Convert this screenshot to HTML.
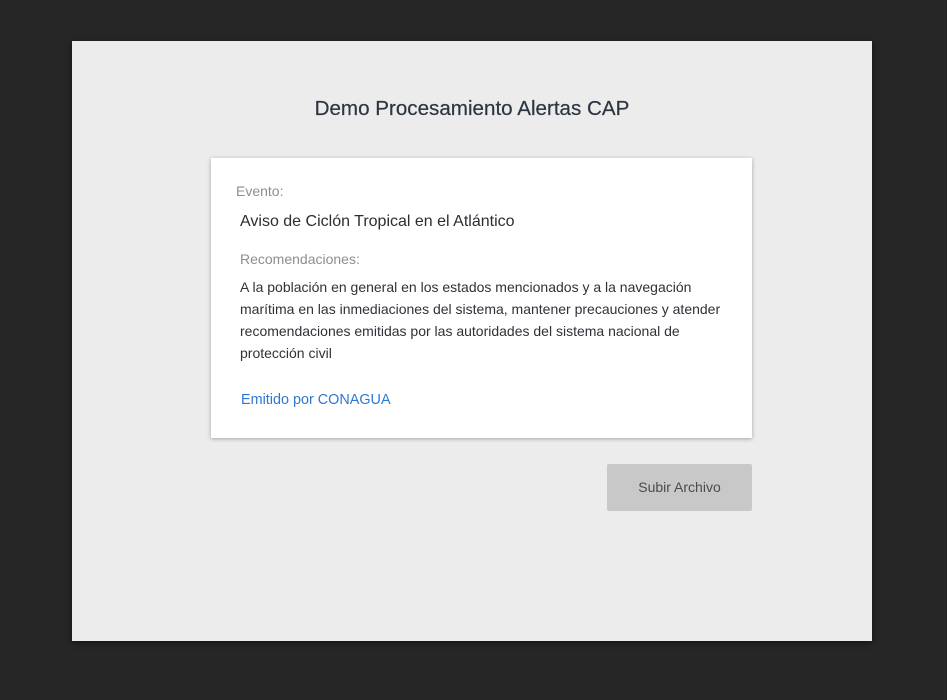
<!DOCTYPE html>
<html><head><meta charset="utf-8"><style>
*{margin:0;padding:0;box-sizing:border-box}
body{width:947px;height:700px;background:#262626;font-family:"Liberation Sans",sans-serif;position:relative;overflow:hidden}
.panel{position:absolute;left:72px;top:41px;width:800px;height:600px;background:#ececec;box-shadow:0 2px 6px rgba(0,0,0,.5)}
h1{position:absolute;left:0;width:800px;top:56px;text-align:center;font-size:20.6px;font-weight:normal;color:#2d3540;line-height:24px;-webkit-text-stroke:0.2px #2d3540}
.card{position:absolute;left:139px;top:117px;width:541px;height:280px;background:#fff;box-shadow:0 1px 4px rgba(0,0,0,.3)}
.t{position:absolute;white-space:nowrap}
.lbl{font-size:14px;color:#8e8e8e}
.p{position:absolute;left:29px;top:118px;width:495px;font-size:14px;line-height:22px;color:#2e3238}
.btn{position:absolute;left:535px;top:423px;width:145px;height:47px;background:#c8c8c8;border-radius:2px;text-align:center;line-height:47px;font-size:14px;color:#4b4b4b}
</style></head><body>
<div class="panel">
<h1>Demo Procesamiento Alertas CAP</h1>
<div class="card">
<div class="t lbl" style="left:25px;top:25px">Evento:</div>
<div class="t" style="left:29px;top:55px;font-size:16px;color:#2a2e33">Aviso de Ciclón Tropical en el Atlántico</div>
<div class="t lbl" style="left:29px;top:93px">Recomendaciones:</div>
<div class="p">A la población en general en los estados mencionados y a la navegación marítima en las inmediaciones del sistema, mantener precauciones y atender recomendaciones emitidas por las autoridades del sistema nacional de protección civil</div>
<div class="t" style="left:30px;top:234px;font-size:14.4px;color:#2f78d0">Emitido por CONAGUA</div>
</div>
<div class="btn">Subir Archivo</div>
</div>
</body></html>
